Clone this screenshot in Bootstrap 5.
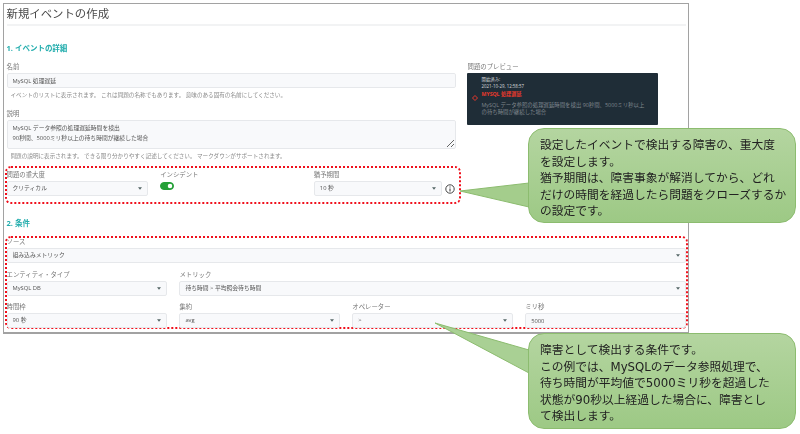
<!DOCTYPE html>
<html lang="ja">
<head>
  <meta charset="UTF-8">
  <meta name="viewport" content="width=device-width, initial-scale=1.0">
  <title>新規イベントの作成</title>
  <link href="https://cdn.jsdelivr.net/npm/bootstrap@5.3.2/dist/css/bootstrap.min.css" rel="stylesheet">
  <style>
    html, body { height: 434px; overflow: hidden; }
    body {
      position: relative;
      background: #fff;
      font-family: "Open Sans", "Noto Sans CJK JP", sans-serif;
      color: #555;
    }
    .console-frame {
      width: 686px;
      margin: 3px 0 0 3px;
      height: 331px;
      padding: 0 2px 0 2.5px;
      border: 1.5px solid #a2a2a2;
      border-bottom-width: 2px;
      border-right-width: 1px;
      filter: blur(.3px);
    }
    .page-title {
      font-size: 11.4px;
      line-height: 20px;
      margin: 0;
      color: #4a4a4a;
      font-weight: 400;
      border-bottom: 2px solid #f2f3f4;
    }
    .sec-title {
      font-size: 7.5px;
      line-height: 10px;
      font-weight: 700;
      color: #22adad;
      margin: 17px 0 0;
    }
    .sec-title-2 { margin-top: 14px; margin-bottom: 8px; }
    .fld { margin-top: 9px; }
    .fld-label {
      display: block;
      font-size: 6.4px;
      line-height: 9px;
      height: 9px;
      margin-bottom: 2px;
      color: #777;
    }
    .fld-input, .fld-select {
      display: block;
      width: 100%;
      height: 15px;
      min-height: 0;
      padding: 0 10px 0 5px;
      font-size: 5.8px;
      line-height: 13px;
      color: #555;
      background-color: #f8f9fb;
      border: 1px solid #e6e8eb;
      border-radius: 2px;
    }
    .fld-select {
      background-image: url("data:image/svg+xml,%3csvg xmlns='http://www.w3.org/2000/svg' viewBox='0 0 6 4'%3e%3cpath fill='%23566' d='M0 0h6L3 4z'/%3e%3c/svg%3e");
      background-position: right 5px center;
      background-size: 4px 3px;
    }
    textarea.fld-input { height: 29px; padding-top: 3px; line-height: 9.5px; resize: both; }
    .fld-help {
      font-size: 5.6px;
      line-height: 9px;
      margin: 3px 0 0 4px;
      color: #8a8a8a;
    }
    .tight-row { --bs-gutter-x: 12px; }
    .mark-box {
      border: 2px dotted #f0101c;
      border-radius: 6px;
    }
    .mark-box-a { margin: 5px -5px 0 -2px; padding: 2px 3px 6px 0; }
    .mark-box-b { margin: 0 -2px 0 -2px; height: 93px; padding: 0; }
    .mark-box-b .fld-label { height: 8px; line-height: 8px; }
    .mark-box-b .cond-row { margin-top: 8px; }
    .mark-box-b .cond-row-last { margin-top: 7px; }
    .switch-line { margin: 0; padding: 0; min-height: 0; line-height: 0; }
    .switch-line .form-check-input {
      width: 14px;
      height: 8px;
      margin: .5px 0 0 0;
      background-color: #25a038;
      border-color: #25a038;
    }
    .info-mark { width: 10px; height: 10px; flex: none; margin-left: 3px; }
    .preview-box {
      width: 191px;
      height: 52px;
      margin-left: -1px;
      padding: 4px 8px 0 15px;
      background: #1f2d37;
      border-radius: 1px;
      color: #d8dcdf;
      font-size: 4.4px;
      line-height: 5px;
      position: relative;
    }
    .preview-when { margin-bottom: 2px; }
    .preview-mark { position: absolute; left: 5.5px; top: 22px; width: 6px; height: 6px; }
    .preview-name { color: #e8392c; font-weight: 700; margin-top: 2px; font-size: 5.2px; line-height: 6px; }
    .preview-desc { color: #7f878e; margin-top: 5px; font-size: 5.4px; line-height: 6.5px; }
    .note-tail { position: absolute; left: 0; top: 0; width: 800px; height: 434px; pointer-events: none; }
    .note-box {
      position: absolute;
      left: 528px;
      width: 268px;
      padding: 8px 0 0 11px;
      font-family: "DejaVu Sans", "Noto Sans CJK JP", sans-serif;
      font-size: 11.75px;
      line-height: 16.5px;
      color: #222;
      white-space: nowrap;
      background: linear-gradient(#b4d5a0, #9dc985);
      border: 1px solid #8cbc6f;
      border-radius: 16px;
      filter: blur(.25px);
    }
    .note-a { top: 128px; height: 95px; }
    .note-b { top: 333px; height: 96px; }
  </style>
</head>
<body>
  <div class="console-frame">
    <h1 class="page-title">新規イベントの作成</h1>
    <h2 class="sec-title">1. イベントの詳細</h2>

    <div class="row tight-row">
      <div class="col-8">
        <div class="fld">
          <label class="fld-label">名前</label>
          <input class="form-control fld-input" value="MySQL 処理遅延">
          <div class="fld-help">イベントのリストに表示されます。 これは問題の名称でもあります。 意味のある固有の名前にしてください。</div>
        </div>
        <div class="fld">
          <label class="fld-label">説明</label>
          <textarea class="form-control fld-input">MySQL データ参照の処理遅延時間を検出
90秒間、5000ミリ秒以上の待ち時間が継続した場合</textarea>
          <div class="fld-help">問題の説明に表示されます。 できる限り分かりやすく記述してください。 マークダウンがサポートされます。</div>
        </div>
        <div class="mark-box mark-box-a">
          <div class="row tight-row">
            <div class="col-4">
              <label class="fld-label">問題の重大度</label>
              <select class="form-select fld-select"><option>クリティカル</option></select>
            </div>
            <div class="col-4">
              <label class="fld-label">インシデント</label>
              <div class="form-check form-switch switch-line">
                <input class="form-check-input" type="checkbox" role="switch" checked>
              </div>
            </div>
            <div class="col-4">
              <label class="fld-label">猶予期間</label>
              <div class="d-flex align-items-center">
                <select class="form-select fld-select"><option>10 秒</option></select>
                <svg class="info-mark" viewBox="0 0 10 10"><circle cx="5" cy="5" r="4.2" fill="none" stroke="#444" stroke-width="1"/><path d="M5 2.6v.9M5 4.4v3" stroke="#444" stroke-width="1.1"/></svg>
              </div>
            </div>
          </div>
        </div>
      </div>
      <div class="col-4">
        <div class="fld">
          <label class="fld-label">問題のプレビュー</label>
          <div class="preview-box">
            <svg class="preview-mark" viewBox="0 0 6 6"><path d="M3 .5 5.5 3 3 5.5 .5 3z" fill="none" stroke="#e8392c" stroke-width="1"/></svg>
            <div class="preview-when">開始済み:</div>
            <div>2021-10-29, 12:58:57</div>
            <div class="preview-name">MYSQL 処理遅延</div>
            <div class="preview-desc">MySQL データ参照の処理遅延時間を検出 90秒間、5000ミリ秒以上の待ち時間が継続した場合</div>
          </div>
        </div>
      </div>
    </div>

    <h2 class="sec-title sec-title-2">2. 条件</h2>
    <div class="mark-box mark-box-b">
      <label class="fld-label">ソース</label>
      <select class="form-select fld-select"><option>組み込みメトリック</option></select>
      <div class="row tight-row cond-row">
        <div class="col-3">
          <label class="fld-label">エンティティ・タイプ</label>
          <select class="form-select fld-select"><option>MySQL DB</option></select>
        </div>
        <div class="col-9">
          <label class="fld-label">メトリック</label>
          <select class="form-select fld-select"><option>待ち時間 &gt; 平均照会待ち時間</option></select>
        </div>
      </div>
      <div class="row tight-row cond-row-last">
        <div class="col-3">
          <label class="fld-label">時間枠</label>
          <select class="form-select fld-select"><option>90 秒</option></select>
        </div>
        <div class="col-3">
          <label class="fld-label">集約</label>
          <select class="form-select fld-select"><option>avg</option></select>
        </div>
        <div class="col-3">
          <label class="fld-label">オペレーター</label>
          <select class="form-select fld-select"><option>&gt;</option></select>
        </div>
        <div class="col-3">
          <label class="fld-label">ミリ秒</label>
          <input class="form-control fld-input" value="5000">
        </div>
      </div>
    </div>
  </div>

  <svg class="note-tail" viewBox="0 0 800 434">
    <path d="M460 191 529 183V207Z" fill="#a4cd8c" stroke="#8cbc6f"/>
    <path d="M435 323 529 350V373Z" fill="#a9d094" stroke="#8cbc6f"/>
  </svg>
  <div class="note-box note-a">設定したイベントで検出する障害の、重大度<br>を設定します。<br>猶予期間は、障害事象が解消してから、どれ<br>だけの時間を経過したら問題をクローズするか<br>の設定です。</div>
  <div class="note-box note-b">障害として検出する条件です。<br>この例では、MySQLのデータ参照処理で、<br>待ち時間が平均値で5000ミリ秒を超過した<br>状態が90秒以上経過した場合に、障害とし<br>て検出します。</div>

  <script src="https://cdn.jsdelivr.net/npm/bootstrap@5.3.2/dist/js/bootstrap.bundle.min.js"></script>
</body>
</html>
